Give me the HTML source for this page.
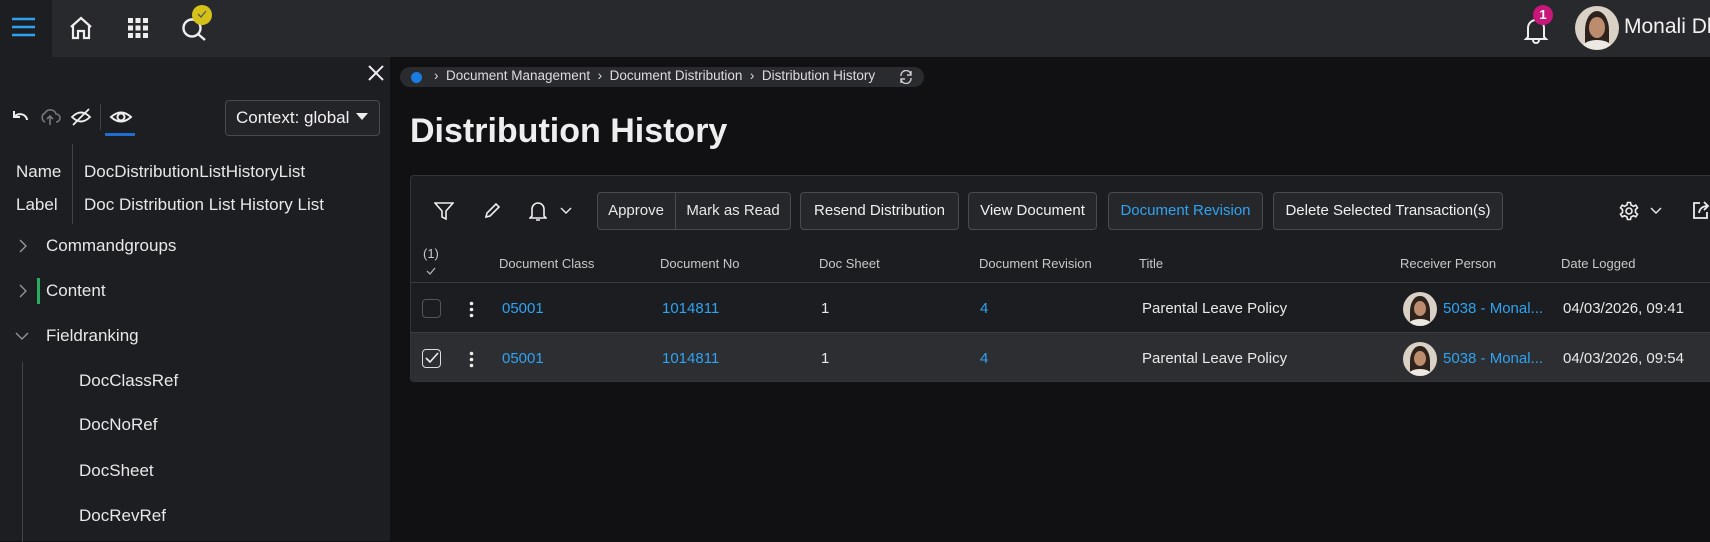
<!DOCTYPE html>
<html><head><meta charset="utf-8"><style>
*{box-sizing:border-box;margin:0;padding:0}
body{width:1710px;height:541px;overflow:hidden;background:#111113;font-family:"Liberation Sans",sans-serif;color:#e8e8e8;position:relative}
.a{position:absolute;white-space:nowrap}
.top{position:absolute;left:0;top:0;width:1710px;height:57px;background:#28292c}
.lc{position:absolute;left:0;top:0;width:52px;height:57px;background:#1d1e21}
.side{position:absolute;left:0;top:57px;width:390px;height:484px;background:#1d1e21}
.t16{font-size:17px;line-height:20px}
.btn{position:absolute;top:192px;height:38px;border:1px solid #4a4b4f;border-radius:4px;background:#26272a;font-size:15px;line-height:36px;text-align:center;color:#f0f0f0}
.hd{position:absolute;top:256px;font-size:13px;color:#c8c8c8}
.v{position:absolute;font-size:15px;line-height:18px}
.bl{color:#2ea3f2}
.av{position:absolute;border-radius:50%;background:#d9d0c6;overflow:hidden}
.av i{position:absolute;left:22%;top:12%;width:56%;height:90%;border-radius:50% 50% 20% 20%;background:#2e221c}
.av b{position:absolute;left:32%;top:26%;width:36%;height:46%;border-radius:50%;background:#bb8c6d}
.av u{position:absolute;left:18%;top:78%;width:64%;height:30%;border-radius:50% 50% 0 0;background:#ece8e2}
</style></head><body>
<div class="top"></div><div class="lc"></div>
<svg class="a" style="left:12px;top:16px" width="24" height="22"><g stroke="#2ea3f2" stroke-width="2.5"><line x1="0" y1="3" x2="23" y2="3"/><line x1="0" y1="11" x2="23" y2="11"/><line x1="0" y1="19" x2="23" y2="19"/></g></svg>
<svg class="a" style="left:68px;top:15px" width="26" height="26" fill="none" stroke="#eee" stroke-width="2.2"><path d="M3 12 L13 3 L23 12 M5 10 V23 H10 V16 H16 V23 H21 V10"/></svg>
<svg class="a" style="left:127px;top:17px" width="22" height="22" fill="#eee"><rect x="1" y="1" width="5" height="5"/><rect x="8.5" y="1" width="5" height="5"/><rect x="16" y="1" width="5" height="5"/><rect x="1" y="8.5" width="5" height="5"/><rect x="8.5" y="8.5" width="5" height="5"/><rect x="16" y="8.5" width="5" height="5"/><rect x="1" y="16" width="5" height="5"/><rect x="8.5" y="16" width="5" height="5"/><rect x="16" y="16" width="5" height="5"/></svg>
<svg class="a" style="left:181px;top:15px" width="30" height="28" fill="none" stroke="#eee" stroke-width="2.4"><circle cx="11" cy="13" r="8.5"/><line x1="17" y1="19" x2="24" y2="25"/></svg>
<div class="a" style="left:192px;top:5px;width:20px;height:20px;border-radius:50%;background:#d4c21a"></div>
<svg class="a" style="left:197px;top:10px" width="10" height="8" fill="none" stroke="#555" stroke-width="1.3"><path d="M1 4 L4 7 L9 1"/></svg>
<svg class="a" style="left:1523px;top:16px" width="26" height="28" fill="none" stroke="#eee" stroke-width="2"><path d="M5 21 V12 A8 8 0 0 1 21 12 V21 L23 23 H3 Z M10 24 A3 3 0 0 0 16 24"/></svg>
<div class="a" style="left:1533px;top:5px;width:20px;height:20px;border-radius:50%;background:#c8177a;color:#fff;font-size:13px;font-weight:bold;text-align:center;line-height:20px">1</div>
<div class="av" style="left:1575px;top:6px;width:44px;height:44px"><i></i><b></b><u></u></div>
<div class="a" style="left:1624px;top:15px;font-size:21px;color:#f2f2f2">Monali Dh</div>

<div class="side"></div>
<svg class="a" style="left:368px;top:65px" width="16" height="16" stroke="#eee" stroke-width="2"><line x1="1" y1="1" x2="15" y2="15"/><line x1="15" y1="1" x2="1" y2="15"/></svg>
<svg class="a" style="left:10px;top:108px" width="20" height="18" fill="none" stroke="#eee" stroke-width="2"><path d="M4 3 V9 H10 M4 9 A7 6 0 0 1 17 12"/></svg>
<svg class="a" style="left:39px;top:107px" width="22" height="20" fill="none" stroke="#777" stroke-width="1.6"><path d="M6 15 A5 5 0 0 1 6 6 A6 6 0 0 1 17 7 A4 4 0 0 1 17 15 M11 18 V9 M8 12 L11 9 L14 12"/></svg>
<svg class="a" style="left:70px;top:106px" width="22" height="22" fill="none" stroke="#eee" stroke-width="1.8"><path d="M2 11 Q11 2 20 11 Q11 20 2 11 Z"/><line x1="3" y1="19" x2="19" y2="3"/></svg>
<div class="a" style="left:100px;top:104px;width:1px;height:26px;background:#444"></div>
<svg class="a" style="left:109px;top:107px" width="24" height="20" fill="none" stroke="#eee" stroke-width="2"><path d="M2 10 Q12 1 22 10 Q12 19 2 10 Z"/><circle cx="12" cy="10" r="3.5"/></svg>
<div class="a" style="left:105px;top:133px;width:30px;height:3px;background:#1c6fd1"></div>
<div class="a" style="left:225px;top:100px;width:155px;height:36px;border:1px solid #4a4b4f;border-radius:4px;background:#232427"></div>
<div class="a" style="left:236px;top:108px;font-size:17px;color:#f0f0f0">Context: global</div>
<svg class="a" style="left:356px;top:113px" width="12" height="8"><path d="M0 0 H12 L6 7 Z" fill="#eee"/></svg>
<div class="a" style="left:72px;top:144px;width:1px;height:80px;background:#444"></div>
<div class="a t16" style="left:16px;top:162px">Name</div>
<div class="a t16" style="left:84px;top:162px">DocDistributionListHistoryList</div>
<div class="a t16" style="left:16px;top:195px">Label</div>
<div class="a t16" style="left:84px;top:195px">Doc Distribution List History List</div>
<svg class="a" style="left:18px;top:239px" width="10" height="14" fill="none" stroke="#999" stroke-width="1.3"><path d="M2 1 L8 7 L2 13"/></svg>
<div class="a t16" style="left:46px;top:236px">Commandgroups</div>
<svg class="a" style="left:18px;top:284px" width="10" height="14" fill="none" stroke="#999" stroke-width="1.3"><path d="M2 1 L8 7 L2 13"/></svg>
<div class="a" style="left:37px;top:278px;width:3px;height:26px;background:#27ae60"></div>
<div class="a t16" style="left:46px;top:281px">Content</div>
<svg class="a" style="left:15px;top:331px" width="14" height="10" fill="none" stroke="#999" stroke-width="1.3"><path d="M1 2 L7 8 L13 2"/></svg>
<div class="a t16" style="left:46px;top:326px">Fieldranking</div>
<div class="a" style="left:22px;top:362px;width:1px;height:180px;background:#444"></div>
<div class="a t16" style="left:79px;top:371px">DocClassRef</div>
<div class="a t16" style="left:79px;top:415px">DocNoRef</div>
<div class="a t16" style="left:79px;top:461px">DocSheet</div>
<div class="a t16" style="left:79px;top:506px">DocRevRef</div>

<div class="a" style="left:400px;top:67px;width:524px;height:20px;border-radius:10px;background:#2a2b2e"></div>
<div class="a" style="left:411px;top:72px;width:11px;height:11px;border-radius:50%;background:#1a7ce0"></div>
<div class="a" style="left:434px;top:68px;font-size:13.5px;color:#ddd">›&nbsp;&nbsp;Document Management&nbsp;&nbsp;›&nbsp;&nbsp;Document Distribution&nbsp;&nbsp;›&nbsp;&nbsp;Distribution History</div>
<svg class="a" style="left:899px;top:70px" width="14" height="14" fill="none" stroke="#ccc" stroke-width="1.4"><path d="M2 6 A5 5 0 0 1 12 5 M12 1 V5 H8 M12 8 A5 5 0 0 1 2 9 M2 13 V9 H6"/></svg>
<div class="a" style="left:410px;top:112px;font-size:34px;font-weight:bold;color:#eee">Distribution History</div>

<div class="a" style="left:410px;top:175px;width:1310px;height:207px;border:1px solid #333438;border-radius:4px;background:#1c1d20"></div>
<div class="a" style="left:411px;top:332px;width:1299px;height:49px;background:#2d2e31"></div>
<div class="a" style="left:411px;top:282px;width:1299px;height:1px;background:#3a3b3f"></div>
<div class="a" style="left:411px;top:332px;width:1299px;height:1px;background:#3a3b3f"></div>
<svg class="a" style="left:434px;top:201px" width="20" height="20" fill="none" stroke="#eee" stroke-width="1.6"><path d="M1 2 H19 L12 10 V18 L8 16 V10 Z"/></svg>
<svg class="a" style="left:483px;top:202px" width="18" height="18" fill="none" stroke="#eee" stroke-width="1.6"><path d="M3 15 L4 11 L13 2 L16 5 L7 14 Z"/></svg>
<svg class="a" style="left:529px;top:200px" width="18" height="22" fill="none" stroke="#eee" stroke-width="1.6"><path d="M3 16 V9 A6 6 0 0 1 15 9 V16 L17 18 H1 Z M7 20 H11"/></svg>
<svg class="a" style="left:560px;top:207px" width="12" height="8" fill="none" stroke="#eee" stroke-width="1.4"><path d="M1 1 L6 6 L11 1"/></svg>
<div class="btn" style="left:597px;width:194px"></div>
<div class="a" style="left:675px;top:193px;width:1px;height:36px;background:#4a4b4f"></div>
<div class="a" style="left:597px;top:193px;width:78px;text-align:center;font-size:15px;line-height:36px">Approve</div>
<div class="a" style="left:676px;top:193px;width:114px;text-align:center;font-size:15px;line-height:36px">Mark as Read</div>
<div class="btn" style="left:800px;width:159px">Resend Distribution</div>
<div class="btn" style="left:968px;width:129px">View Document</div>
<div class="btn" style="left:1108px;width:155px;color:#2ea3f2">Document Revision</div>
<div class="btn" style="left:1273px;width:230px">Delete Selected Transaction(s)</div>
<svg class="a" style="left:1619px;top:201px" width="20" height="20" fill="none" stroke="#eee" stroke-width="1.6"><circle cx="10" cy="10" r="3"/><path d="M8.5 1.5 H11.5 L12 4 L14.5 5.3 L16.8 4.2 L18.5 6.8 L16.5 8.5 V11.5 L18.5 13.2 L16.8 15.8 L14.5 14.7 L12 16 L11.5 18.5 H8.5 L8 16 L5.5 14.7 L3.2 15.8 L1.5 13.2 L3.5 11.5 V8.5 L1.5 6.8 L3.2 4.2 L5.5 5.3 L8 4 Z"/></svg>
<svg class="a" style="left:1650px;top:207px" width="12" height="8" fill="none" stroke="#eee" stroke-width="1.4"><path d="M1 1 L6 6 L11 1"/></svg>
<svg class="a" style="left:1692px;top:200px" width="18" height="20" fill="none" stroke="#eee" stroke-width="1.8"><path d="M8 3 H2 V18 H15 V12 M7 13 Q8 6 16 6 M12 2 L16 6 L12 10"/></svg>

<div class="hd" style="left:423px;top:246px">(1)</div>
<svg class="a" style="left:426px;top:267px" width="10" height="8" fill="none" stroke="#bbb" stroke-width="1.2"><path d="M1 4 L4 7 L9 1"/></svg>
<div class="hd" style="left:499px">Document Class</div>
<div class="hd" style="left:660px">Document No</div>
<div class="hd" style="left:819px">Doc Sheet</div>
<div class="hd" style="left:979px">Document Revision</div>
<div class="hd" style="left:1139px">Title</div>
<div class="hd" style="left:1400px">Receiver Person</div>
<div class="hd" style="left:1561px">Date Logged</div>

<div class="a" style="left:422px;top:299px;width:19px;height:19px;border:1.5px solid #555;border-radius:4px"></div>
<svg class="a" style="left:469px;top:301px" width="5" height="17" fill="#eee"><circle cx="2.5" cy="2.5" r="1.8"/><circle cx="2.5" cy="8.5" r="1.8"/><circle cx="2.5" cy="14.5" r="1.8"/></svg>
<div class="v bl" style="left:502px;top:300px">05001</div>
<div class="v bl" style="left:662px;top:300px">1014811</div>
<div class="v" style="left:821px;top:300px">1</div>
<div class="v bl" style="left:980px;top:300px">4</div>
<div class="v" style="left:1142px;top:300px">Parental Leave Policy</div>
<div class="av" style="left:1403px;top:292px;width:34px;height:34px"><i></i><b></b><u></u></div>
<div class="v bl" style="left:1443px;top:300px">5038 - Monal...</div>
<div class="v" style="left:1563px;top:300px">04/03/2026, 09:41</div>
<div class="a" style="left:422px;top:349px;width:19px;height:19px;border:1.5px solid #ddd;border-radius:4px"></div>
<svg class="a" style="left:425px;top:352px" width="14" height="12" fill="none" stroke="#eee" stroke-width="1.6"><path d="M1 6 L5 10 L13 1"/></svg>
<svg class="a" style="left:469px;top:351px" width="5" height="17" fill="#eee"><circle cx="2.5" cy="2.5" r="1.8"/><circle cx="2.5" cy="8.5" r="1.8"/><circle cx="2.5" cy="14.5" r="1.8"/></svg>
<div class="v bl" style="left:502px;top:350px">05001</div>
<div class="v bl" style="left:662px;top:350px">1014811</div>
<div class="v" style="left:821px;top:350px">1</div>
<div class="v bl" style="left:980px;top:350px">4</div>
<div class="v" style="left:1142px;top:350px">Parental Leave Policy</div>
<div class="av" style="left:1403px;top:342px;width:34px;height:34px"><i></i><b></b><u></u></div>
<div class="v bl" style="left:1443px;top:350px">5038 - Monal...</div>
<div class="v" style="left:1563px;top:350px">04/03/2026, 09:54</div>
</body></html>
